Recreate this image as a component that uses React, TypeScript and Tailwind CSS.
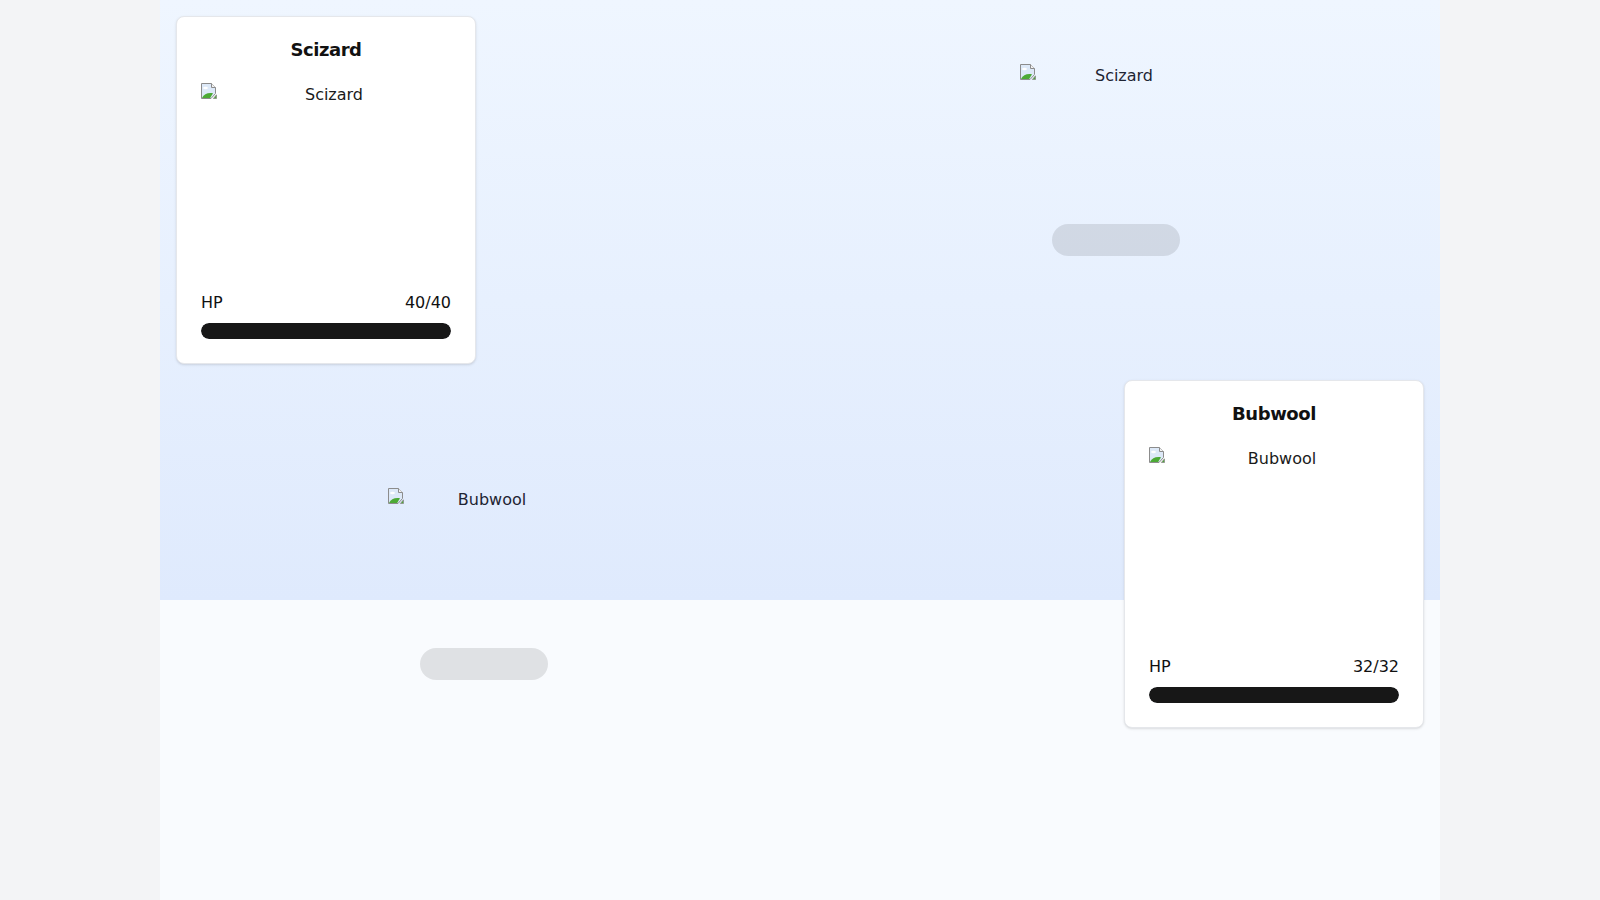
import React from "react";

type Monster = {
    name: string;
    hp: number;
    maxHp: number;
};

const opponent: Monster = { name: "Scizard", hp: 40, maxHp: 40 };
const player: Monster = { name: "Bubwool", hp: 32, maxHp: 32 };

// Chrome-ish broken image glyph, since the sprites never load
const BrokenIcon: React.FC = () => (
    <svg className="float-left block h-4 w-4" viewBox="0 0 16 16" xmlns="http://www.w3.org/2000/svg">
        <path d="M0.5 0.5h10l4 4v6l-4.5 5H0.5z" fill="#dde9f8" stroke="#8c8c8c" />
        <path d="M10.5 0.5v4h4" fill="#f2f2f2" stroke="#8c8c8c" />
        <ellipse cx="4.5" cy="5" rx="2.4" ry="1.3" fill="#ffffff" />
        <path d="M1 15C3 11 6.5 9.5 12 10.2L9.2 15H1z" fill="#4caa35" />
        <path d="M15.5 11.8L12.4 15.5h3.1z" fill="#4caa35" stroke="#8c8c8c" strokeWidth="0.8" />
    </svg>
);

const Sprite: React.FC<{ alt: string; className: string }> = ({ alt, className }) => (
    <div className={`overflow-hidden text-center ${className}`}>
        <BrokenIcon />
        <span>{alt}</span>
    </div>
);

const StatusCard: React.FC<{ monster: Monster; className?: string }> = ({ monster, className }) => {
    const pct = (monster.hp / monster.maxHp) * 100;
    return (
        <div className={`w-[300px] rounded-lg border border-gray-200 bg-white p-6 shadow-sm ${className ?? ""}`}>
            <h2 className="mb-6 text-center text-lg leading-none font-bold tracking-tight text-[#111111]">
                {monster.name}
            </h2>
            <Sprite alt={monster.name} className="h-48 w-full text-[#1a1a1a]" />
            <div className="mt-4 flex justify-between text-base leading-6 text-[#111111]">
                <span>HP</span>
                <span>
                    {monster.hp}/{monster.maxHp}
                </span>
            </div>
            <div className="mt-2 h-4 w-full overflow-hidden rounded-full bg-gray-200">
                <div className="h-full rounded-full bg-neutral-900" style={{ width: `${pct}%` }} />
            </div>
        </div>
    );
};

const FieldSprite: React.FC<{ monster: Monster; className: string }> = ({ monster, className }) => (
    <div className={`flex flex-col items-center py-12 ${className}`}>
        <Sprite alt={monster.name} className="h-40 w-48 text-[#1e2433]" />
        <div className="h-8 w-32 rounded-full bg-black/10" />
    </div>
);

const App: React.FC = () => {
    return (
        <div className="min-h-screen bg-gray-100 font-['DejaVu_Sans',sans-serif]">
            <main className="mx-auto min-h-screen max-w-7xl bg-[linear-gradient(to_bottom,#eff6ff_0px,#dfeafd_600px,#f9fbfe_600px)]">
                <div className="grid grid-cols-2 gap-4 p-4">
                    <StatusCard monster={opponent} className="justify-self-start" />
                    <FieldSprite monster={opponent} className="self-start" />
                    <FieldSprite monster={player} className="self-end" />
                    <StatusCard monster={player} className="justify-self-end" />
                </div>
            </main>
        </div>
    );
};

export default App;
